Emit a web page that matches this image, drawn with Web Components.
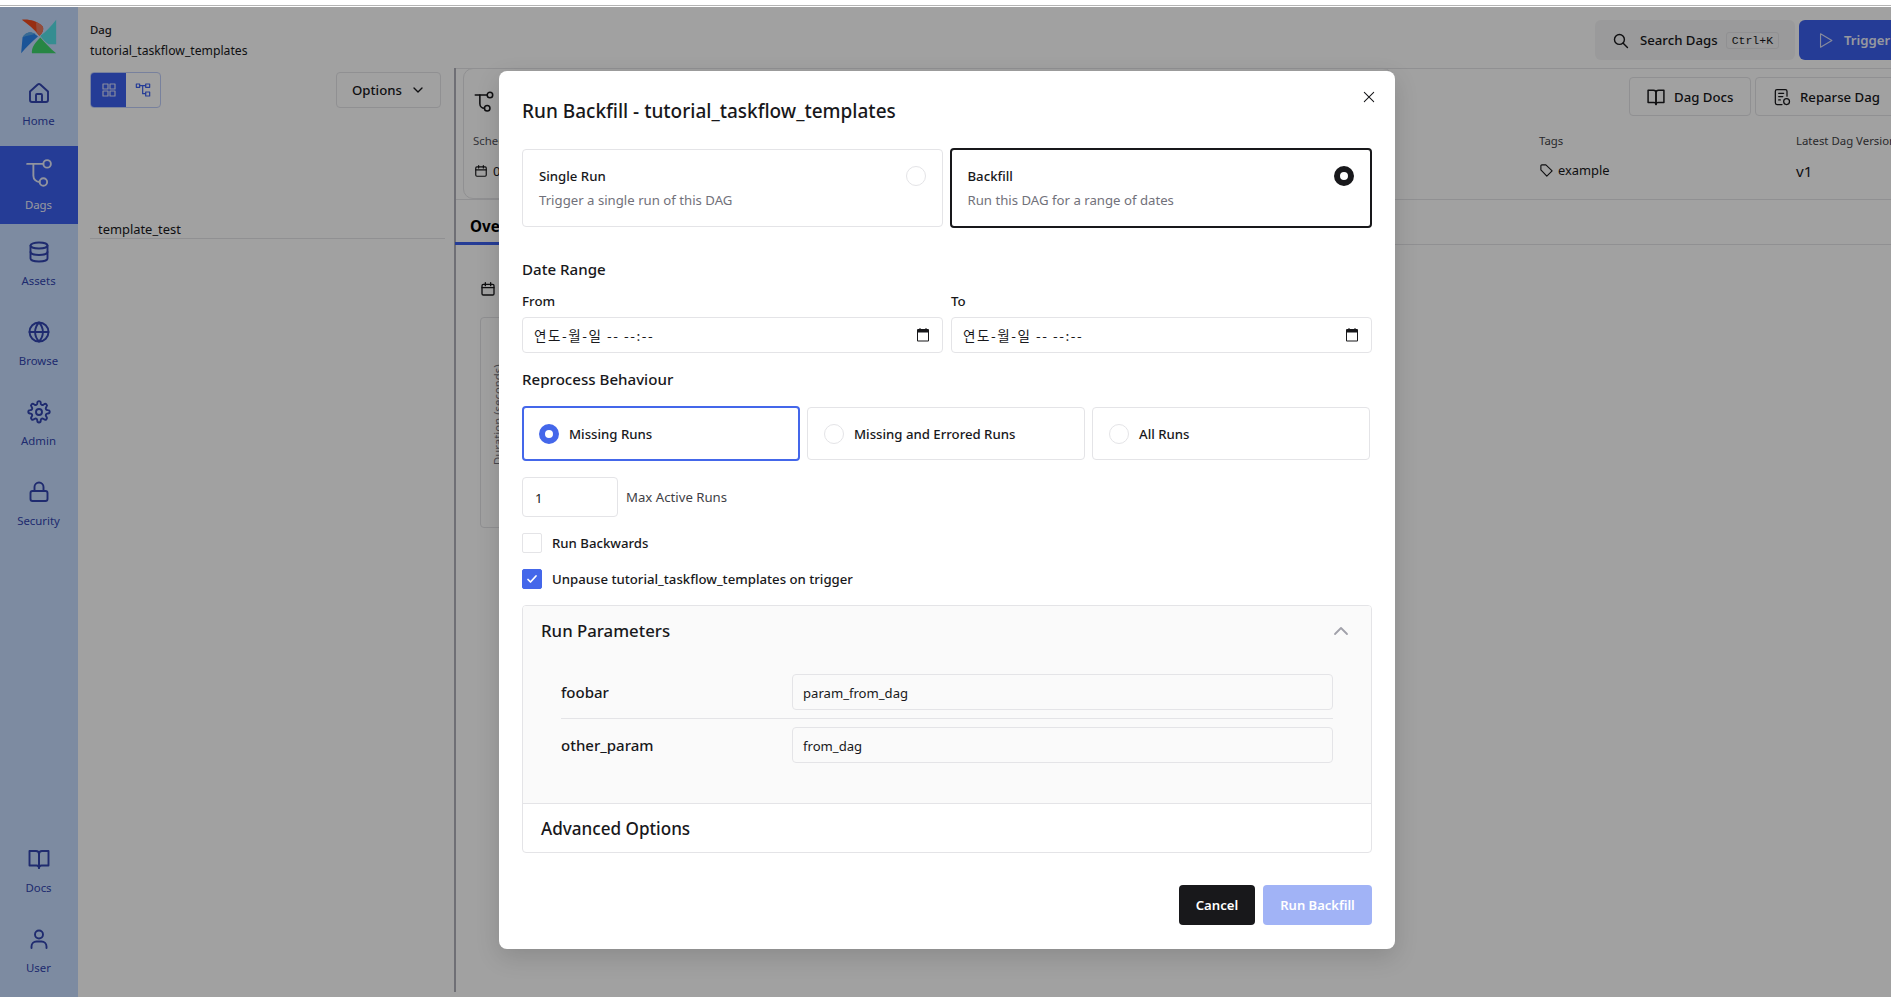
<!DOCTYPE html>
<html lang="en">
<head>
<meta charset="utf-8">
<title>Run Backfill</title>
<style>
  html, body { margin: 0; height: 100%; overflow: hidden; background: #fff; }
  body { font-family: "Noto Sans", "Noto Sans CJK KR", sans-serif; font-size: 13.200px; color: #18181b; }
</style>
</head>
<body>
<af-app></af-app>

<script>
const icons = {
  home: '<path d="M3 10.500 10.700 3.500a2 2 0 0 1 2.600 0L21 10.500V19a2 2 0 0 1-2 2H5a2 2 0 0 1-2-2z"/><path d="M9 21v-7a1 1 0 0 1 1-1h4a1 1 0 0 1 1 1v7"/>',
  dags: '<path d="M2.500 5.500h13"/><path d="M7.500 5.500v9.500a5 5 0 0 0 5 5"/><circle cx="18.500" cy="5.500" r="3"/><circle cx="15.500" cy="20" r="3"/>',
  db: '<ellipse cx="12" cy="5.500" rx="8.500" ry="3"/><path d="M3.500 5.500v13c0 1.700 3.800 3 8.500 3s8.500-1.300 8.500-3v-13"/><path d="M3.500 12c0 1.700 3.800 3 8.500 3s8.500-1.300 8.500-3"/>',
  globe: '<circle cx="12" cy="12" r="9.500"/><path d="M2.500 12h19"/><path d="M12 2.500c2.600 2.700 3.900 5.900 3.900 9.500s-1.300 6.800-3.900 9.500c-2.600-2.700-3.900-5.900-3.900-9.500s1.300-6.800 3.900-9.500z"/>',
  gear: '<circle cx="12" cy="12" r="3"/><path d="M10.300 2.800a1.700 1.700 0 0 1 3.400 0l.1.900a1.700 1.700 0 0 0 2.500 1.100l.8-.5a1.700 1.700 0 0 1 2.400 2.400l-.5.800a1.700 1.700 0 0 0 1.100 2.500l.9.100a1.700 1.700 0 0 1 0 3.400l-.9.100a1.700 1.700 0 0 0-1.100 2.500l.5.800a1.700 1.700 0 0 1-2.400 2.400l-.8-.5a1.700 1.700 0 0 0-2.500 1.100l-.1.900a1.700 1.700 0 0 1-3.400 0l-.1-.9a1.700 1.700 0 0 0-2.500-1.100l-.8.5a1.700 1.700 0 0 1-2.400-2.400l.5-.8a1.700 1.700 0 0 0-1.100-2.500l-.9-.1a1.700 1.700 0 0 1 0-3.400l.9-.1a1.700 1.700 0 0 0 1.100-2.500l-.5-.8a1.700 1.700 0 0 1 2.400-2.400l.8.500a1.700 1.700 0 0 0 2.500-1.100z"/>',
  lock: '<rect x="3.500" y="11" width="17" height="10" rx="2"/><path d="M7.500 11V7a4.500 4.500 0 0 1 9 0v4"/>',
  book: '<path d="M2.500 4H9a3 3 0 0 1 3 3v14a2.500 2.500 0 0 0-2.500-2.500h-7z"/><path d="M21.500 4H15a3 3 0 0 0-3 3v14a2.500 2.500 0 0 1 2.500-2.500h7z"/>',
  user: '<circle cx="12" cy="7.500" r="4"/><path d="M4.500 21v-1.500a5 5 0 0 1 5-5h5a5 5 0 0 1 5 5V21"/>',
  grid: '<rect x="3" y="3" width="7.500" height="7.500"/><rect x="13.500" y="3" width="7.500" height="7.500"/><rect x="3" y="13.500" width="7.500" height="7.500"/><rect x="13.500" y="13.500" width="7.500" height="7.500"/>',
  graph: '<rect x="2" y="3" width="5" height="5"/><rect x="16" y="3" width="6" height="5"/><rect x="16" y="15" width="6" height="6"/><path d="M7 5.500h9M11.500 5.500v12H16"/>',
  chevron: '<path d="m6 9 6 6 6-6"/>',
  chevronUp: '<path d="m6 15 6-6 6 6"/>',
  calendar: '<rect x="3" y="5" width="18" height="16" rx="2"/><path d="M3 10h18M8 2.500V7M16 2.500V7"/>',
  search: '<circle cx="10.500" cy="10.500" r="7"/><path d="m15.800 15.800 6 6"/>',
  play: '<path d="M5 2.500 21 12 5 21.500z"/>',
  file: '<path d="M18 11V5a2 2 0 0 0-2-2H6a2 2 0 0 0-2 2v14a2 2 0 0 0 2 2h6"/><path d="M8 7.500h6M8 11.500h5M8 15.500h2"/><circle cx="17.500" cy="17.500" r="3.500"/>',
  tag: '<path d="M3 4.500A1.500 1.500 0 0 1 4.500 3H11l10 9.500-8.500 8.500L3 11z"/>',
  close: '<path d="M4 4l16 16M20 4 4 20"/>'
};

function icon(name, size, width) {
  return `<svg width="${size}" height="${size}" viewBox="0 0 24 24" fill="none" stroke="currentColor" stroke-width="${width || 2}" stroke-linecap="round" stroke-linejoin="round" style="display:block;flex:none">${icons[name]}</svg>`;
}

class AfNavItem extends HTMLElement {
  connectedCallback() {
    const active = this.hasAttribute("active");
    const tight = this.hasAttribute("tight");
    const size = active ? 30 : 24;
    this.attachShadow({ mode: "open" }).innerHTML = `
<style>
  :host { display: flex; flex-direction: column; align-items: center; box-sizing: border-box;
    height: ${active ? 78 : 80}px; padding: ${active ? 11 : tight ? 15 : 16}px 1px 0 0; gap: ${active ? 9 : tight ? 7 : 8}px;
    color: ${active ? "#e6ebfb" : "#3144b0"}; background: ${active ? "#3c5fee" : "transparent"}; }
  span { font-size: 11.400px; line-height: 18px; color: ${active ? "#eef1fc" : "#3144b0"}; }
</style>
${icon(this.getAttribute("icon"), size, active ? 1.5 : 1.9)}
<span><slot></slot></span>`;
  }
}
customElements.define("af-nav-item", AfNavItem);

class AfSidebar extends HTMLElement {
  constructor() {
    super();
    this.attachShadow({ mode: "open" }).innerHTML = `
<style>
  :host { display: flex; flex-direction: column; width: 78px; flex: none; background: #c6ddff; padding-bottom: 6px; box-sizing: border-box; }
  .logo { height: 59px; display: flex; justify-content: center; padding-top: 12px; box-sizing: border-box; flex: none; }
  .spacer { flex: 1; }
</style>
<div class="logo">
  <svg width="36" height="35" viewBox="18 20 106 104">
    <path d="M20 22C40 20 65 25 82 42 86 50 82 62 72 70 58 50 38 36 20 22z" fill="#f04a1e"/>
    <path d="M62 30C72 33 78 37 82 42 86 50 82 62 72 70 70 66 66 62 64 58z" fill="#e8795f"/>
    <path d="M122 22V95H100C92 90 82 82 75 70 92 58 108 40 122 22z" fill="#55dfe6"/>
    <path d="M122 122H50C49 108 54 95 75 75 90 92 105 108 122 122z" fill="#3fd46c"/>
    <path d="M18 122 22 75C30 60 48 52 68 72 50 88 32 104 18 122z" fill="#2b85f0"/>
    <path d="M22 75C28 63 42 53 60 64 48 68 32 70 22 75z" fill="#5aa9ea"/>
  </svg>
</div>
<af-nav-item icon="home" tight>Home</af-nav-item>
<af-nav-item icon="dags" active>Dags</af-nav-item>
<af-nav-item icon="db">Assets</af-nav-item>
<af-nav-item icon="globe">Browse</af-nav-item>
<af-nav-item icon="gear">Admin</af-nav-item>
<af-nav-item icon="lock">Security</af-nav-item>
<div class="spacer"></div>
<af-nav-item icon="book">Docs</af-nav-item>
<af-nav-item icon="user">User</af-nav-item>`;
  }
}
customElements.define("af-sidebar", AfSidebar);

class AfDagPage extends HTMLElement {
  constructor() {
    super();
    this.attachShadow({ mode: "open" }).innerHTML = `
<style>
  :host { display: flex; flex-direction: column; flex: 1; min-width: 0; overflow: hidden; background: #fff;
    font-size: 13.200px; color: #18181b; }
  .btn { display: flex; align-items: center; box-sizing: border-box; border: 1px solid #e4e4e7; border-radius: 4px; font-weight: 500; white-space: nowrap; }
  header { display: flex; flex: none; height: 61px; box-sizing: border-box; padding: 14px 0 0 12px; justify-content: space-between; }
  .crumb b { display: block; font-size: 11.400px; line-height: 18px; font-weight: 500; color: #27272a; }
  .crumb span { display: block; font-size: 12.200px; line-height: 20px; margin-top: 2px; }
  .top-actions { display: flex; gap: 4px; margin: -1px -40px 0 0; }
  .search { width: 200px; height: 40px; box-sizing: border-box; padding-left: 17px; gap: 11px; background: #f4f4f5; border-radius: 6px; display: flex; align-items: center; font-weight: 500; }
  kbd { font-family: "Liberation Mono", monospace; font-size: 11.500px; border: 1px solid #e4e4e7; border-radius: 3px; padding: 1px 5px; margin-left: -3px; background: #f4f4f5; }
  .trigger { width: 132px; height: 40px; box-sizing: border-box; padding-left: 18px; gap: 10px; background: #3c5fee; color: #eef1fc; border-radius: 6px; display: flex; align-items: center; font-weight: 600; }
  .trigger svg { color: #d6dcf7; }
  .body { flex: 1; display: flex; min-height: 0; }
  .left { width: 376px; flex: none; box-sizing: border-box; padding: 4px 9px 0 12px; }
  .left-top { display: flex; justify-content: space-between; padding-right: 4px; }
  .toggle { display: flex; width: 71px; height: 36px; border: 1px solid #bfcdf9; border-radius: 4px; box-sizing: border-box; overflow: hidden; color: #3c5fee; }
  .toggle div { flex: 1; display: flex; align-items: center; justify-content: center; }
  .toggle .on { background: #3c5fee; color: #d9e0fb; flex: 0 0 35px; }
  .options { width: 105px; height: 36px; padding-left: 15px; gap: 8px; }
  .row { margin-top: 111px; padding-left: 8px; font-size: 12.900px; line-height: 20px; height: 19px; border-bottom: 1px solid #e4e4e7; }
  .split { width: 2px; flex: none; background: #b0b0ba; margin-bottom: 5px; }
  .right { flex: 1; min-width: 0; position: relative; border-top: 1px solid #e4e4e7; }
  .meta { display: flex; justify-content: flex-end; gap: 4px; padding-top: 8px; margin-right: -24px; height: 47px; box-sizing: border-box; }
  .meta .btn { height: 39px; gap: 8px; padding: 0 0 0 16px; width: 122px; }
  .meta .btn + .btn { width: 160px; }
  .card { position: absolute; left: 7px; top: -1px; width: 930px; height: 131px; border: 1px solid #e4e4e7; border-radius: 10px; box-sizing: border-box; padding: 21px 0 0 9px; }
  .card small { display: block; font-size: 11.400px; line-height: 18px; margin-top: 20px; color: #52525b; }
  .card .v { display: flex; gap: 5px; align-items: center; margin-top: 11px; line-height: 20px; font-size: 13px; margin-left: 1px; }
  .facts { display: flex; padding: 16px 0 0 1083px; height: 84px; box-sizing: border-box; border-bottom: 1px solid #e4e4e7; }
  .facts > div { flex: none; width: 257px; }
  .facts small { display: block; font-size: 11.400px; line-height: 18px; color: #3f3f46; white-space: nowrap; }
  .facts .v { display: flex; align-items: center; gap: 4px; margin-top: 10px; line-height: 20px; font-size: 12.900px; }
  .facts .big { font-size: 15.200px; margin-top: 11px; }
  .tabs { height: 45px; border-bottom: 1px solid #e4e4e7; padding: 14px 0 0 15px; box-sizing: border-box; position: relative; font-weight: 700; font-size: 15.200px; line-height: 24px; color: #000; margin-left: -1px; }
  .tabs i { position: absolute; left: 0; bottom: -1px; width: 100px; height: 3px; background: #3c5fee; }
  .cal { margin: 36px 0 0 24px; }
  .chart { margin: 20px 0 0 24px; width: 100px; height: 211px; border: 1px solid #e4e4e7; border-radius: 4px; box-sizing: border-box; position: relative; overflow: hidden; }
  .chart span { position: absolute; left: 9px; top: 147px; transform-origin: 0 0; transform: rotate(-90deg); font-size: 11.400px; white-space: nowrap; color: #71717a; }
</style>
<header>
  <div class="crumb"><b>Dag</b><span>tutorial_taskflow_templates</span></div>
  <div class="top-actions">
    <div class="search">${icon("search", 17)}<span>Search Dags</span><kbd>Ctrl+K</kbd></div>
    <div class="trigger">${icon("play", 17, 1.600)}<span>Trigger</span></div>
  </div>
</header>
<div class="body">
  <section class="left">
    <div class="left-top">
      <div class="toggle"><div class="on">${icon("grid", 16, 1.800)}</div><div>${icon("graph", 16, 1.800)}</div></div>
      <div class="btn options">Options ${icon("chevron", 16)}</div>
    </div>
    <div class="row">template_test</div>
  </section>
  <div class="split"></div>
  <section class="right">
    <div class="card">${icon("dags", 22, 1.700)}<small>Schedule</small><div class="v">${icon("calendar", 14)}<span>0 0 * * *</span></div></div>
    <div class="meta">
      <div class="btn">${icon("book", 20, 1.800)}Dag Docs</div>
      <div class="btn">${icon("file", 20, 1.500)}Reparse Dag</div>
    </div>
    <div class="facts">
      <div><small>Tags</small><div class="v">${icon("tag", 15, 1.800)}<span>example</span></div></div>
      <div><small>Latest Dag Version</small><div class="v big">v1</div></div>
    </div>
    <div class="tabs">Overview<i></i></div>
    <div class="cal">${icon("calendar", 16)}</div>
    <div class="chart"><span>Duration (seconds)</span></div>
  </section>
</div>`;
  }
}
customElements.define("af-dag-page", AfDagPage);

class AfChoiceCard extends HTMLElement {
  connectedCallback() {
    this.attachShadow({ mode: "open" }).innerHTML = `
<style>
  :host { display: block; flex: 1; min-width: 0; box-sizing: border-box; height: 78px; margin-top: 1px;
    border: 1px solid #e4e4e7; border-radius: 4px; padding: 16px 16px 0 16px; }
  :host([checked]) { border: 2px solid #18181b; height: 80px; margin-top: 0; }
  .top { display: flex; justify-content: space-between; align-items: center; height: 20px; font-size: 13.200px; font-weight: 500; line-height: 20px; }
  .desc { font-size: 13.200px; line-height: 20px; margin-top: 4px; color: #71717a; }
  i { width: 18px; height: 18px; border-radius: 50%; border: 1px solid #e4e4e7; display: block; }
  :host([checked]) i { width: 8px; height: 8px; border: 6px solid #18181b; background: #fff; }
</style>
<div class="top"><span><slot name="title"></slot></span><i></i></div>
<div class="desc"><slot></slot></div>`;
  }
}
customElements.define("af-choice-card", AfChoiceCard);

class AfDateField extends HTMLElement {
  connectedCallback() {
    this.attachShadow({ mode: "open" }).innerHTML = `
<style>
  :host { display: block; flex: 1; min-width: 0; }
  label { display: block; font-size: 13.300px; line-height: 20px; font-weight: 500; margin-bottom: 6px; }
  div { height: 36px; box-sizing: border-box; border: 1px solid #e4e4e7; border-radius: 4px; display: flex; align-items: center; justify-content: space-between; padding: 0 12px 0 11px; color: #18181b; }
  span { font-family: "Noto Sans CJK KR", "Noto Sans", sans-serif; font-size: 13.500px; letter-spacing: 1.550px; }
  svg { display: block; }
</style>
<label>${this.getAttribute("label")}</label>
<div><span>연도-월-일 -- --:--</span>
<svg width="14" height="14" viewBox="0 0 14 14" fill="#18181b"><path d="M2 1h1.500V0h1v1h5V0h1v1H12a1 1 0 0 1 1 1v10.500a1 1 0 0 1-1 1H2a1 1 0 0 1-1-1V2a1 1 0 0 1 1-1zm0 3.500v8h10v-8z"/></svg></div>`;
  }
}
customElements.define("af-date-field", AfDateField);

class AfRadioBox extends HTMLElement {
  connectedCallback() {
    this.attachShadow({ mode: "open" }).innerHTML = `
<style>
  :host { display: flex; align-items: center; gap: 10px; box-sizing: border-box; width: 278px; height: 53px; margin-top: 1px;
    border: 1px solid #e4e4e7; border-radius: 4px; padding-left: 16px; font-size: 13.200px; font-weight: 500; }
  :host([checked]) { border: 2px solid #4467ea; height: 55px; margin-top: 0; padding-left: 15px; }
  i { width: 18px; height: 18px; border: 1px solid #e4e4e7; border-radius: 50%; display: block; }
  :host([checked]) i { width: 8px; height: 8px; border: 6px solid #4467ea; background: #fff; }
</style>
<i></i><span><slot></slot></span>`;
  }
}
customElements.define("af-radio-box", AfRadioBox);

class AfCheck extends HTMLElement {
  connectedCallback() {
    this.attachShadow({ mode: "open" }).innerHTML = `
<style>
  :host { display: flex; align-items: center; gap: 10px; height: 20px; font-size: 13.200px; font-weight: 500; }
  i { width: 18px; height: 18px; border: 1px solid #e4e4e7; border-radius: 2px; display: flex; align-items: center; justify-content: center; flex: none; }
  :host([checked]) i { background: #4467ea; border-color: #4467ea; }
</style>
<i>${this.hasAttribute("checked") ? '<svg width="12" height="12" viewBox="0 0 24 24" fill="none" stroke="#fff" stroke-width="3.500" stroke-linecap="round" stroke-linejoin="round"><path d="m4 13 5 5 11-12"/></svg>' : ""}</i>
<span><slot></slot></span>`;
  }
}
customElements.define("af-check", AfCheck);

class AfParamRow extends HTMLElement {
  connectedCallback() {
    this.attachShadow({ mode: "open" }).innerHTML = `
<style>
  :host { display: flex; align-items: center; height: 36px; }
  label { width: 231px; flex: none; font-size: 15px; font-weight: 500; }
  div { flex: 1; height: 36px; box-sizing: border-box; border: 1px solid #e4e4e7; border-radius: 4px; padding: 1px 10px 0; display: flex; align-items: center; font-size: 13.100px; line-height: 20px; }
</style>
<label>${this.getAttribute("name")}</label><div>${this.getAttribute("value")}</div>`;
  }
}
customElements.define("af-param-row", AfParamRow);

class AfBackfillDialog extends HTMLElement {
  constructor() {
    super();
    this.attachShadow({ mode: "open" }).innerHTML = `
<style>
  :host { display: block; box-sizing: border-box; width: 896px; height: 878px; background: #fff; border-radius: 8px;
    box-shadow: 0 8px 24px rgba(0,0,0,.14); padding: 24px 23px 0 23px; color: #18181b; position: relative; }
  h2 { margin: 0; font-size: 19px; font-weight: 500; line-height: 32px; }
  .close { position: absolute; right: 19px; top: 19px; }
  .kind { display: flex; gap: 7px; margin-top: 21px; }
  h3 { margin: 0; font-size: 15.100px; font-weight: 500; line-height: 24px; }
  .dates { display: flex; gap: 8px; margin-top: 10px; }
  .repro { display: flex; gap: 7px; margin-top: 15px; }
  .max { display: flex; align-items: center; gap: 8px; margin-top: 16px; font-size: 13.200px; color: #3f3f46; }
  .num { width: 96px; height: 40px; box-sizing: border-box; border: 1px solid #e4e4e7; border-radius: 4px; padding: 1px 0 0 12px; display: flex; align-items: center; color: #18181b; }
  .checks { display: flex; flex-direction: column; gap: 16px; margin-top: 16px; }
  .acc { margin-top: 16px; border: 1px solid #e4e4e7; border-radius: 4px; height: 248px; box-sizing: border-box; overflow: hidden; }
  .open { background: #fafafa; height: 197px; border-bottom: 1px solid #e4e4e7; }
  .acc-head { display: flex; justify-content: space-between; align-items: center; height: 27px; padding: 11px 18px 0 18px; font-size: 16.800px; font-weight: 500; line-height: 27px; }
  .acc-head svg { color: #a1a1aa; }
  .params { margin: 30px 38px 0 38px; display: flex; flex-direction: column; }
  .params hr { margin: 8px 0; border: 0; border-top: 1px solid #e4e4e7; }
  .adv { font-size: 17.100px; font-weight: 500; line-height: 27px; padding: 11px 18px; }
  .foot { display: flex; justify-content: flex-end; gap: 8px; margin-top: 32px; }
  .foot div { height: 40px; display: flex; align-items: center; justify-content: center; border-radius: 4px; font-weight: 600; box-sizing: border-box; }
  .cancel { width: 76px; background: #18181b; color: #fff; }
  .run { width: 109px; background: #a1b3f6; color: #fff; font-size: 13px; }
</style>
<h2>Run Backfill - tutorial_taskflow_templates</h2>
<div class="close">${icon("close", 14, 1.800)}</div>
<div class="kind">
  <af-choice-card><span slot="title">Single Run</span>Trigger a single run of this DAG</af-choice-card>
  <af-choice-card checked><span slot="title">Backfill</span>Run this DAG for a range of dates</af-choice-card>
</div>
<h3 style="margin-top:29px">Date Range</h3>
<div class="dates">
  <af-date-field label="From"></af-date-field>
  <af-date-field label="To"></af-date-field>
</div>
<h3 style="margin-top:14px">Reprocess Behaviour</h3>
<div class="repro">
  <af-radio-box checked>Missing Runs</af-radio-box>
  <af-radio-box>Missing and Errored Runs</af-radio-box>
  <af-radio-box>All Runs</af-radio-box>
</div>
<div class="max"><div class="num">1</div><span>Max Active Runs</span></div>
<div class="checks">
  <af-check>Run Backwards</af-check>
  <af-check checked>Unpause tutorial_taskflow_templates on trigger</af-check>
</div>
<div class="acc">
  <div class="open">
    <div class="acc-head"><span>Run Parameters</span>${icon("chevronUp", 24, 1.800)}</div>
    <div class="params">
      <af-param-row name="foobar" value="param_from_dag"></af-param-row>
      <hr>
      <af-param-row name="other_param" value="from_dag"></af-param-row>
    </div>
  </div>
  <div class="adv">Advanced Options</div>
</div>
<div class="foot"><div class="cancel">Cancel</div><div class="run">Run Backfill</div></div>`;
  }
}
customElements.define("af-backfill-dialog", AfBackfillDialog);

class AfApp extends HTMLElement {
  constructor() {
    super();
    this.attachShadow({ mode: "open" }).innerHTML = `
<style>
  :host { display: flex; flex-direction: column; height: 100vh; overflow: hidden; }
  .strip { height: 7px; flex: none; background: #fff; box-sizing: border-box; padding-top: 5px; }
  .strip div { height: 1px; background: #b4b4b4; }
  .shell { flex: 1; display: flex; min-height: 0; position: relative; }
  .backdrop { position: absolute; inset: 0; background: rgba(0,0,0,.37); display: flex; justify-content: center; align-items: flex-start; padding: 64px 0 0 3px; box-sizing: border-box; }
</style>
<div class="strip"><div></div></div>
<div class="shell">
  <af-sidebar></af-sidebar>
  <af-dag-page></af-dag-page>
  <div class="backdrop"><af-backfill-dialog></af-backfill-dialog></div>
</div>`;
  }
}
customElements.define("af-app", AfApp);
</script>
</body>
</html>
